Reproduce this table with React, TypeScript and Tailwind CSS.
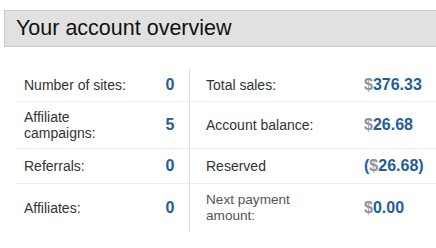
const rows = [
  {
    left: "Number of sites:",
    leftValue: "0",
    right: "Total sales:",
    rightValue: { prefix: "", amount: "376.33", suffix: "" },
    h: "h-[39px] pt-[5px]",
  },
  {
    left: "Affiliate campaigns:",
    leftValue: "5",
    right: "Account balance:",
    rightValue: { prefix: "", amount: "26.68", suffix: "" },
    h: "h-[47px]",
  },
  {
    left: "Referrals:",
    leftValue: "0",
    right: "Reserved",
    rightValue: { prefix: "(", amount: "26.68", suffix: ")" },
    h: "h-[35px]",
  },
  {
    left: "Affiliates:",
    leftValue: "0",
    right: "Next payment amount:",
    rightValue: { prefix: "", amount: "0.00", suffix: "" },
    h: "h-[48px]",
    last: true,
  },
];

export default function App() {
  return (
    <div
      className="w-[436px] h-[248px] bg-white overflow-hidden pt-[10px] pl-[4px]"
      style={{ fontFamily: '"Liberation Sans", Arial, sans-serif' }}
    >
      {/* Header */}
      <div className="h-[37px] w-[440px] bg-[#e1e1e1] border border-[#c9c9c9] flex items-center pl-[11px]">
        <h1 className="text-[21.5px] leading-none text-[#111]">Your account overview</h1>
      </div>

      {/* Stats */}
      <div className="mt-[16px] ml-[12px] flex flex-col">
        {rows.map((r, i) => (
          <div key={i} className={`flex ${r.h}`}>
            <div className="w-[174px] flex border-r border-[#dedede]">
              <div
                className={`w-[172px] flex items-center ${
                  r.last ? "" : "border-b border-[#ededed]"
                }`}
              >
                <div className="flex-1 pl-[8px]">
                  <span className="block w-[110px] text-[14px] leading-[16px] text-[#333]">
                    {r.left}
                  </span>
                </div>
                <span className="w-[30px] mr-[3px] text-center text-[16px] font-bold text-[#245d99]">
                  {r.leftValue}
                </span>
              </div>
            </div>
            <div
              className={`flex-1 flex items-center ${
                r.last ? "" : "border-b border-[#ededed]"
              }`}
            >
              <div className="w-[174px] pl-[16px]">
                <span
                  className={`block w-[120px] font-normal ${
                    r.last
                      ? "text-[13.6px] leading-[16px] text-[#555]"
                      : "text-[14px] leading-[16px] text-[#333]"
                  }`}
                >
                  {r.right}
                </span>
              </div>
              <span className="text-[16px] font-bold text-[#245d99]">
                {r.rightValue.prefix}
                <span className="text-[#8f9499]">$</span>
                {r.rightValue.amount}
                {r.rightValue.suffix}
              </span>
            </div>
          </div>
        ))}
      </div>
    </div>
  );
}
